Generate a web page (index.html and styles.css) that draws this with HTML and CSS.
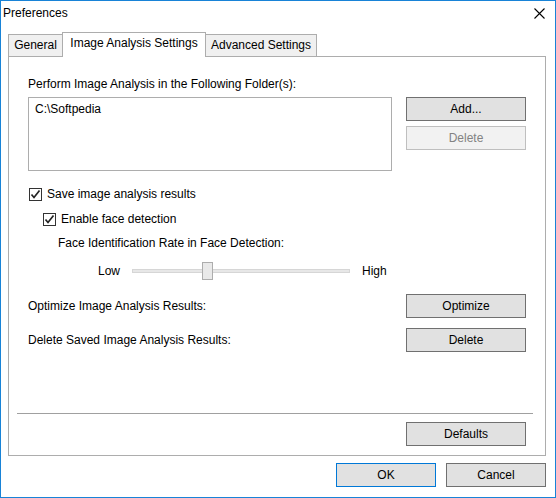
FILE: index.html
```html
<!DOCTYPE html>
<html>
<head>
<meta charset="utf-8">
<link rel="stylesheet" href="styles.css">
</head>
<body>
<div class="window">
  <div class="titlebar">
    <span class="title">Preferences</span>
    <svg class="close" width="11" height="11" viewBox="0 0 11 11"><path d="M0.5 0.5 L10.5 10.5 M10.5 0.5 L0.5 10.5" stroke="#000" stroke-width="1.1" fill="none"/></svg>
  </div>
  <div class="tabs">
    <div class="tab tab-general">General</div>
    <div class="tab tab-active">Image Analysis Settings</div>
    <div class="tab tab-advanced">Advanced Settings</div>
  </div>
  <div class="panel">
    <div class="folder-label">Perform Image Analysis in the Following Folder(s):</div>
    <div class="folder-row">
      <div class="listbox"><div class="list-item">C:\Softpedia</div></div>
      <div class="btn-col">
        <div class="btn">Add...</div>
        <div class="btn btn-disabled">Delete</div>
      </div>
    </div>
    <div class="check-row check-save">
      <span class="checkbox"><svg width="11" height="11" viewBox="0 0 11 11"><path d="M1.5 5.5 L4 8.5 L9.5 1.5" stroke="#222" stroke-width="1.7" fill="none"/></svg></span>
      <span class="check-label">Save image analysis results</span>
    </div>
    <div class="check-row check-face">
      <span class="checkbox"><svg width="11" height="11" viewBox="0 0 11 11"><path d="M1.5 5.5 L4 8.5 L9.5 1.5" stroke="#222" stroke-width="1.7" fill="none"/></svg></span>
      <span class="check-label">Enable face detection</span>
    </div>
    <div class="rate-label">Face Identification Rate in Face Detection:</div>
    <div class="slider-row">
      <span class="slider-text">Low</span>
      <div class="slider">
        <div class="track"></div>
        <div class="thumb"></div>
      </div>
      <span class="slider-text">High</span>
    </div>
    <div class="action-row action-optimize">
      <span>Optimize Image Analysis Results:</span>
      <div class="btn">Optimize</div>
    </div>
    <div class="action-row action-delete">
      <span>Delete Saved Image Analysis Results:</span>
      <div class="btn">Delete</div>
    </div>
    <div class="separator"></div>
    <div class="defaults-row">
      <div class="btn">Defaults</div>
    </div>
  </div>
  <div class="footer">
    <div class="btn btn-small btn-default">OK</div>
    <div class="btn btn-small">Cancel</div>
  </div>
</div>
</body>
</html>
```
FILE: styles.css
```css
* { box-sizing: border-box; }
html, body { margin: 0; padding: 0; background: #fff; }
body {
  font-family: "Liberation Sans", Arial, sans-serif;
  font-size: 12px;
  color: #000;
}
.window {
  width: 556px;
  height: 498px;
  border: 1px solid #1883d7;
  background: #fff;
  display: flex;
  flex-direction: column;
}
.titlebar {
  height: 31px;
  display: flex;
  justify-content: space-between;
  align-items: flex-start;
  padding: 5px 10px 0 2px;
}
.title { line-height: 14px; }
.close { margin-top: 2px; }
.tabs {
  display: flex;
  align-items: flex-end;
  height: 24px;
  padding-left: 7px;
  position: relative;
  z-index: 1;
}
.tab {
  height: 22px;
  line-height: 21px;
  text-align: center;
  background: #f0f0f0;
  border: 1px solid #adadad;
  border-bottom: none;
  white-space: nowrap;
}
.tab-general { width: 54px; border-right: none; }
.tab-active {
  width: 144px;
  height: 25px;
  line-height: 21px;
  padding-bottom: 2px;
  background: #fff;
  margin-bottom: -1px;
}
.tab-advanced { width: 111px; border-left: none; }
.panel {
  margin: 0 9px 0 7px;
  height: 400px;
  border: 1px solid #adadad;
  background: #fff;
  padding: 0 19px 9px 19px;
  display: flex;
  flex-direction: column;
}
.folder-label { margin-top: 20px; line-height: 14px; }
.folder-row {
  margin-top: 6px;
  display: flex;
  gap: 14px;
}
.listbox {
  width: 364px;
  height: 74px;
  border: 1px solid #adadad;
  padding: 4px 0 0 6px;
}
.list-item { line-height: 14px; }
.btn-col { display: flex; flex-direction: column; gap: 5px; }
.btn {
  width: 120px;
  height: 24px;
  border: 1px solid #707070;
  background: #e1e1e1;
  text-align: center;
  line-height: 22px;
}
.btn-disabled {
  border-color: #bfbfbf;
  background: #f2f2f2;
  color: #838383;
}
.check-row {
  display: flex;
  align-items: center;
  height: 13px;
  gap: 5px;
}
.check-save { margin-top: 17px; margin-left: 1px; }
.check-face { margin-top: 12px; margin-left: 15px; }
.checkbox {
  width: 13px;
  height: 13px;
  border: 1px solid #333;
  background: #fff;
  display: flex;
  align-items: center;
  justify-content: center;
}
.check-label { line-height: 13px; }
.rate-label { margin-top: 10px; margin-left: 30px; line-height: 14px; }
.slider-row {
  margin-top: 12px;
  margin-left: 70px;
  height: 18px;
  display: flex;
  align-items: center;
  gap: 12px;
}
.slider-text { line-height: 14px; }
.slider {
  position: relative;
  width: 218px;
  height: 18px;
  display: flex;
  align-items: center;
}
.track {
  width: 100%;
  height: 4px;
  background: #e7e7e7;
  border: 1px solid #d6d6d6;
}
.thumb {
  position: absolute;
  left: 70px;
  top: 0;
  width: 11px;
  height: 18px;
  background: #e9e9e9;
  border: 1px solid #adadad;
}
.action-row {
  display: flex;
  justify-content: space-between;
  align-items: center;
  height: 24px;
}
.action-optimize { margin-top: 14px; }
.action-delete { margin-top: 10px; }
.separator {
  margin: 61px -7px 0 -11px;
  height: 1px;
  background: #a0a0a0;
}
.defaults-row {
  margin-top: 8px;
  display: flex;
  justify-content: flex-end;
}
.footer {
  display: flex;
  justify-content: flex-end;
  gap: 10px;
  padding: 7px 9px 0 0;
}
.btn-small { width: 100px; }
.btn-default { border-color: #0078d7; }
```
